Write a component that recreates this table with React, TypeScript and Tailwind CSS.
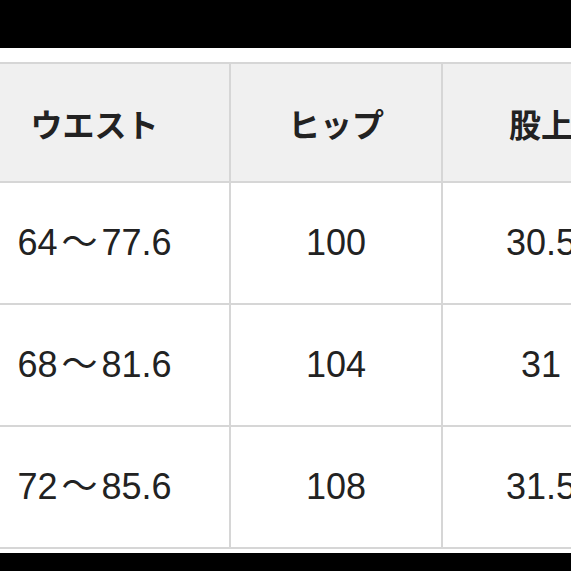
const header = ['ウエスト', 'ヒップ', '股上', '股下'];

const rows = [
  ['64～77.6', '100', '30.5', '76'],
  ['68～81.6', '104', '31', '77'],
  ['72～85.6', '108', '31.5', '78'],
];

// the range cells draw the wave dash with a little air on both sides
const Cell = ({ text }: { text: string }) => {
  const parts = text.split('～');
  if (parts.length < 2) return <>{text}</>;
  return (
    <>
      {parts[0]}
      <span className="mx-[4px]">～</span>
      {parts[1]}
    </>
  );
};

export default function App() {
  return (
    <div
      className="w-[571px] h-[571px] bg-white flex flex-col overflow-hidden text-[#222]"
      style={{ fontFamily: '"Liberation Sans", "Noto Sans CJK JP", sans-serif' }}
    >
      <div className="h-[48px] bg-black shrink-0" />
      <div className="h-[14px] shrink-0" />
      <div className="overflow-hidden shrink-0">
        <table className="table-fixed border-collapse -ml-[42px] w-[900px]">
          <colgroup>
            <col className="w-[271px]" />
            <col className="w-[212px]" />
            <col className="w-[198px]" />
            <col className="w-[219px]" />
          </colgroup>
          <thead>
            <tr className="h-[119px] bg-[#f0f0f0]">
              {header.map(h => (
                <th
                  key={h}
                  className="border-2 border-[#d6d6d6] text-[32px] font-semibold text-center align-middle"
                  style={{ fontFamily: '"Noto Sans CJK JP", sans-serif' }}
                >
                  {h}
                </th>
              ))}
            </tr>
          </thead>
          <tbody>
            {rows.map(r => (
              <tr key={r[0]} className="h-[122px]">
                {r.map((c, i) => (
                  <td
                    key={i}
                    className="border-2 border-[#d6d6d6] text-[36px] text-center align-middle"
                  >
                    <Cell text={c} />
                  </td>
                ))}
              </tr>
            ))}
          </tbody>
        </table>
      </div>
      <div className="h-[4px] shrink-0" />
      <div className="flex-1 bg-black" />
    </div>
  );
}
